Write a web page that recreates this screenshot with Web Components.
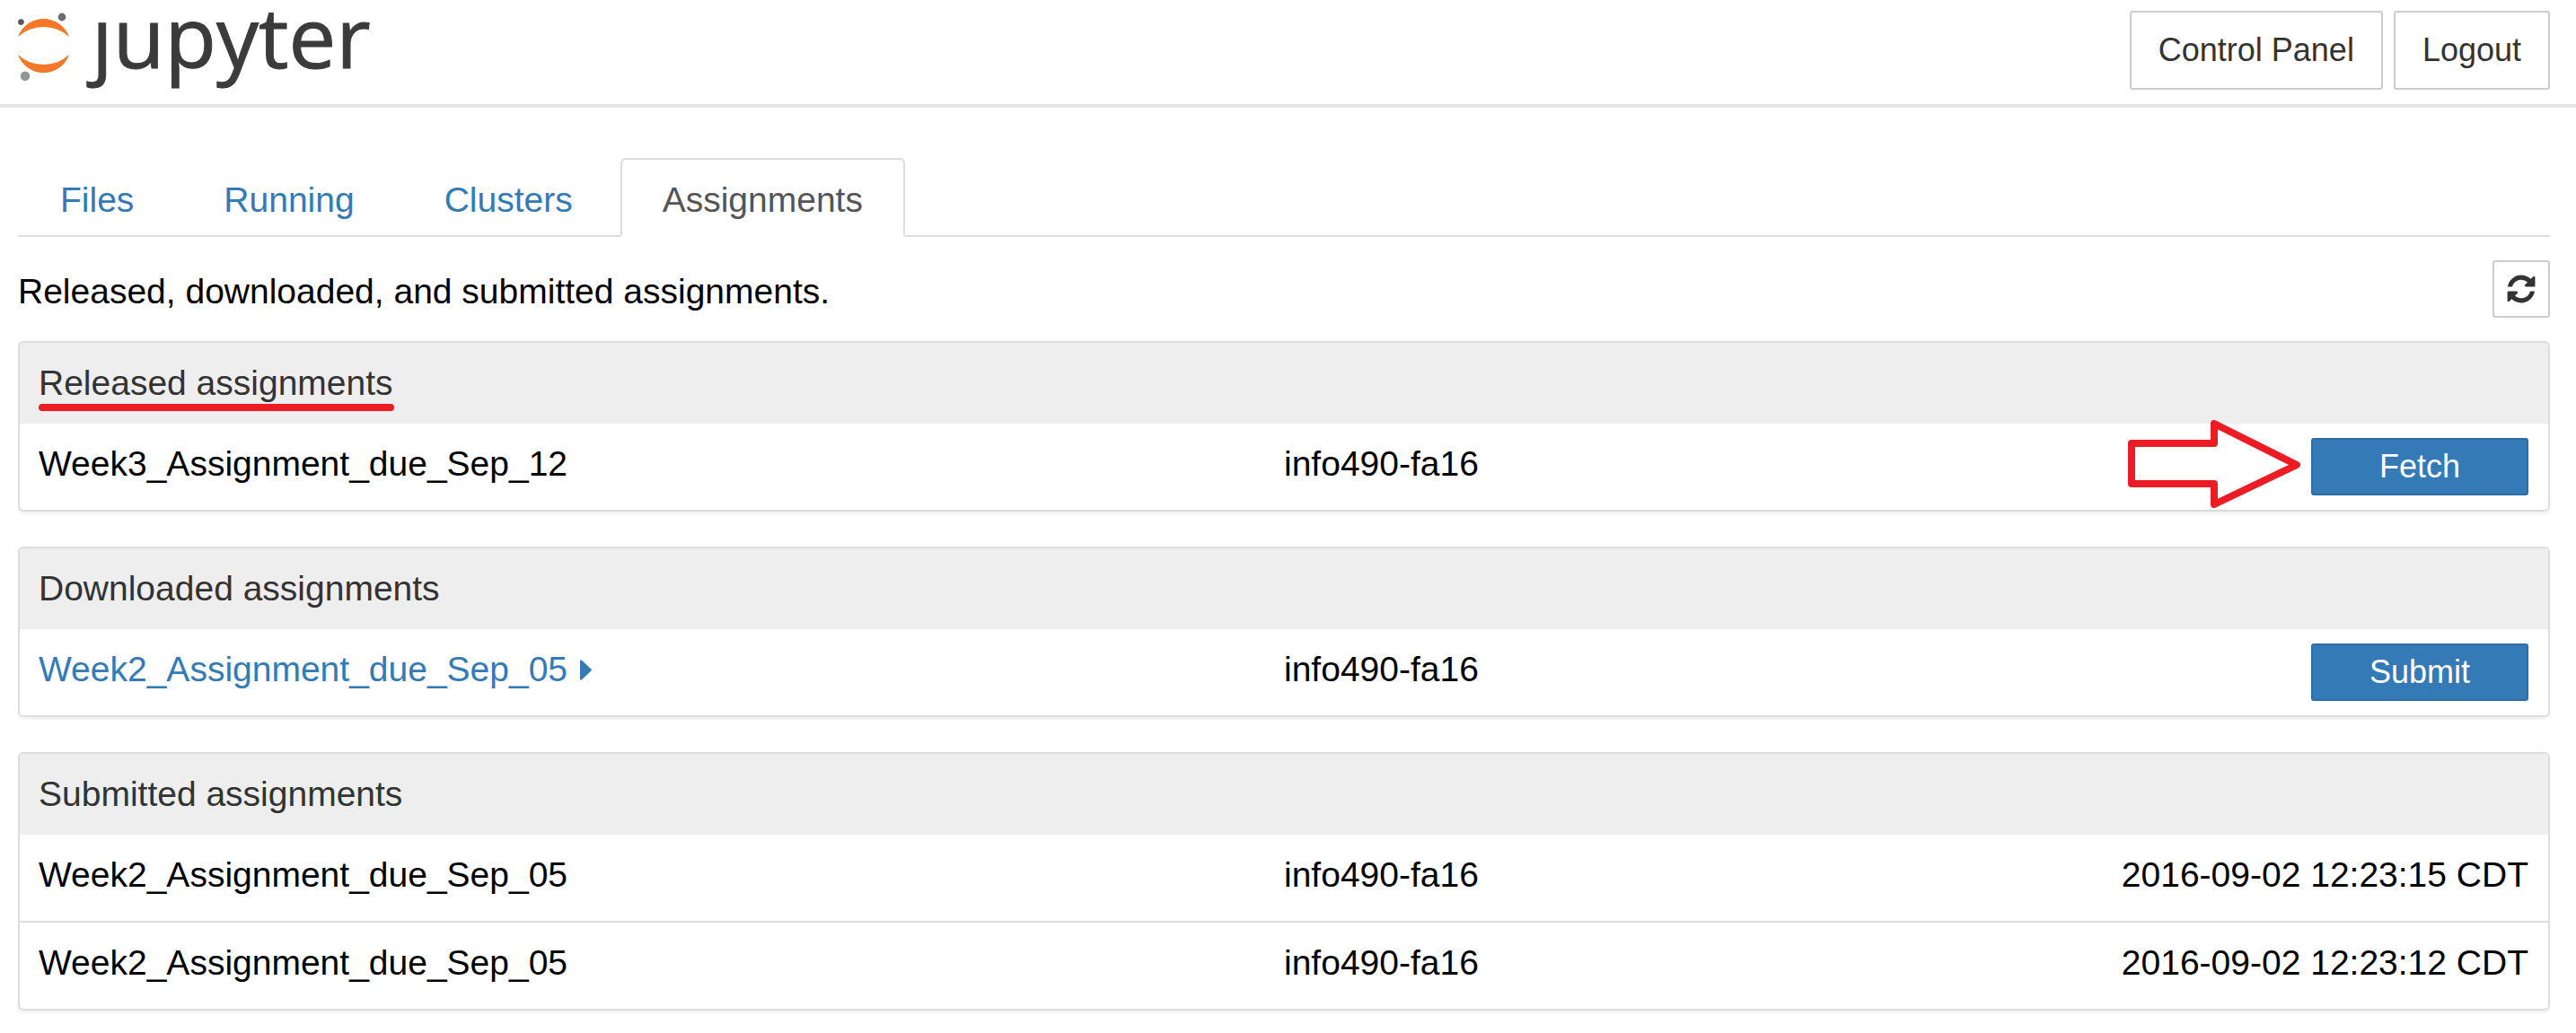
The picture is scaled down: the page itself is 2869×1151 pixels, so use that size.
<!DOCTYPE html>
<html lang="en">
<head>
<meta charset="utf-8">
<title>Assignments</title>
<style>
  body { margin: 0; background: #fff; color: #000; font: 39px/56px "Liberation Sans", Arial, sans-serif; }
</style>
</head>
<body>
<nb-page></nb-page>

<script>
const define = (name, html, setup) => {
  const template = document.createElement('template');
  template.innerHTML = html;
  customElements.define(name, class extends HTMLElement {
    connectedCallback() {
      if (this.shadowRoot) return;
      const root = this.attachShadow({ mode: 'open' });
      root.append(template.content.cloneNode(true));
      if (setup) setup(this, root);
    }
  });
};

define('nb-logo', `
  <style>
    :host { display: block; }
    a { display: flex; align-items: flex-start; gap: 24px; color: #3b3b3c; text-decoration: none; }
    svg { display: block; width: 58px; height: 80px; }
    .word { font: 94px/56px "Open Sans", "Noto Sans", sans-serif; -webkit-text-stroke: 1px currentColor; }
    /* the wordmark's j carries no dot */
    .j { display: inline-block; clip-path: inset(12px -20px -40px -30px); }
  </style>
  <a href="#" aria-label="jupyter">
    <svg viewBox="20 12 58 80" aria-hidden="true">
      <path fill="#f37726" d="M20 41A30.3 30.3 0 0 1 77 41A42.4 42.4 0 0 0 20 41ZM20 61A30.3 30.3 0 0 0 77 61A42.4 42.4 0 0 1 20 61Z"/>
      <circle cx="23.4" cy="24.6" r="3.3" fill="#58595b"/>
      <circle cx="69" cy="19" r="4.4" fill="#6d6e71"/>
      <circle cx="28" cy="84.8" r="5.2" fill="#939598"/>
    </svg>
    <span class="word"><span class="j">j</span>upyter</span>
  </a>`);

define('nb-button', `
  <style>
    :host { display: block; }
    button { display: block; box-sizing: border-box; width: 100%; margin: 0; padding: 0 30px; border: 2px solid #ccc;
      border-radius: 3px; background: #fff; color: #333; font: inherit; font-size: 36px; line-height: 84px; white-space: nowrap; }
    :host([kind=primary]) { width: 242px; }
    :host([kind=primary]) button { background: #337ab7; border-color: #2e6da4; color: #fff; line-height: 60px; }
    :host([kind=icon]) button { width: 64px; height: 64px; padding: 0; display: flex; align-items: center; justify-content: center; }
  </style>
  <button type="button"><slot></slot></button>`,
  (el, root) => {
    const label = el.getAttribute('label');
    if (label) root.querySelector('button').setAttribute('aria-label', label);
  });

define('nb-header', `
  <style>
    :host { display: flex; justify-content: space-between; align-items: flex-start; padding: 12px 29px 16px 20px; border-bottom: 4px solid #e7e7e7; }
    div { display: flex; gap: 12px; }
  </style>
  <nb-logo></nb-logo>
  <div><slot></slot></div>`);

define('nb-tab', `
  <style>
    :host { display: block; margin-bottom: -2px; }
    a { display: block; padding: 17px 45px 11px; border: 2px solid transparent; border-radius: 6px 6px 0 0; color: #337ab7; text-decoration: none; }
    :host([active]) a { color: #555; background: #fff; border-color: #ddd #ddd #fff; }
  </style>
  <a href="#"><slot></slot></a>`);

define('nb-tabs', `
  <style>
    :host { display: flex; gap: 6px; border-bottom: 2px solid #ddd; }
  </style>
  <slot></slot>`);

define('nb-toolbar', `
  <style>
    :host { display: flex; justify-content: space-between; align-items: flex-start; }
    p { margin: 0; line-height: 70px; }
    svg { display: block; width: 36px; height: 36px; fill: #333; }
  </style>
  <p><slot></slot></p>
  <nb-button kind="icon" label="Refresh">
    <svg viewBox="0 0 1792 1792" aria-hidden="true"><path d="M1639 1056q0 5-1 7-64 268-268 434.5t-478 166.5q-146 0-282.5-55t-243.5-157l-129 129q-19 19-45 19t-45-19-19-45v-448q0-26 19-45t45-19h448q26 0 45 19t19 45-19 45l-137 137q71 66 161 102t187 36q134 0 250-65t186-179q11-17 53-117 8-23 30-23h192q13 0 22.5 9.5t9.5 22.5zm25-800v448q0 26-19 45t-45 19h-448q-26 0-45-19t-19-45 19-45l138-138q-148-137-349-137-134 0-250 65t-186 179q-11 17-53 117-8 23-30 23h-199q-13 0-22.5-9.5t-9.5-22.5v-7q65-268 270-434.5t480-166.5q146 0 284 55.5t245 156.5l130-129q19-19 45-19t45 19 19 45z"/></svg>
  </nb-button>`);

define('nb-panel', `
  <style>
    :host { display: block; border: 2px solid #ddd; border-radius: 6px; box-shadow: 0 3px 3px rgba(0,0,0,.05); }
    h2 { margin: 0; padding: 17px 21px; background: #eee; color: #333; font: inherit; border-radius: 4px 4px 0 0; }
    h2 span { position: relative; display: inline-block; }
    :host([marked]) h2 span::after { content: ""; position: absolute; left: 0; right: -1px; top: 51px; height: 8px; border-radius: 4px; background: #ed1c24; }
  </style>
  <h2><span><slot name="title"></slot></span></h2>
  <slot></slot>`);

define('pointer-arrow', `
  <style>
    :host { position: absolute; right: 100%; top: -20px; margin-right: 12px; }
    svg { display: block; width: 192px; height: 98px; fill: none; stroke: #ed1c24; stroke-width: 8; stroke-linejoin: round; }
  </style>
  <svg viewBox="0 0 192 98" aria-hidden="true"><path d="M4 26H96V4L188 50L96 94V71H4Z"/></svg>`);

const assignments = {
  released: [{ name: 'Week3_Assignment_due_Sep_12', course: 'info490-fa16', action: 'Fetch', pointed: true }],
  downloaded: [{ name: 'Week2_Assignment_due_Sep_05', course: 'info490-fa16', action: 'Submit', link: true }],
  submitted: [
    { name: 'Week2_Assignment_due_Sep_05', course: 'info490-fa16', time: '2016-09-02 12:23:15 CDT' },
    { name: 'Week2_Assignment_due_Sep_05', course: 'info490-fa16', time: '2016-09-02 12:23:12 CDT' }
  ]
};

define('assignment-table', `
  <style>
    :host { display: block; }
    table { width: 100%; table-layout: fixed; border-spacing: 0; }
    td { padding: 17px 0 23px; vertical-align: top; white-space: nowrap; }
    td:first-child { width: 50%; padding-left: 21px; box-sizing: border-box; }
    td:last-child { padding-right: 22px; text-align: right; }
    td.action { padding-top: 16px; padding-bottom: 16px; }
    .action div { position: relative; width: fit-content; margin-left: auto; text-align: center; }
    tr + tr td { border-top: 2px solid #ddd; }
    a { display: inline-flex; align-items: center; gap: 14px; color: #337ab7; text-decoration: none; }
    svg { width: 13px; height: 23px; fill: currentColor; }
  </style>
  <table><tbody></tbody></table>`,
  (el, root) => {
    root.querySelector('tbody').innerHTML = assignments[el.getAttribute('kind')].map(row => `<tr>
      <td>${row.link ? `<a href="#">${row.name}<svg viewBox="0 0 13 23" aria-hidden="true"><path d="M0 1.2Q.8-.4 2 .8L12.4 10.6Q13.2 11.5 12.4 12.4L2 22.2Q.8 23.4 0 21.8Z"/></svg></a>` : row.name}</td>
      <td>${row.course}</td>
      ${row.action
        ? `<td class="action"><div>${row.pointed ? '<pointer-arrow></pointer-arrow>' : ''}<nb-button kind="primary">${row.action}</nb-button></div></td>`
        : `<td>${row.time}</td>`}
    </tr>`).join('');
  });

define('nb-page', `
  <style>
    :host { display: block; }
    main { padding: 56px 29px 25px 20px; }
    nb-toolbar { margin: 26px 0 20px; }
    section { display: flex; flex-direction: column; gap: 39px; }
  </style>
  <nb-header>
    <nb-button>Control Panel</nb-button>
    <nb-button>Logout</nb-button>
  </nb-header>
  <main>
    <nb-tabs>
      <nb-tab>Files</nb-tab>
      <nb-tab>Running</nb-tab>
      <nb-tab>Clusters</nb-tab>
      <nb-tab active>Assignments</nb-tab>
    </nb-tabs>
    <nb-toolbar>Released, downloaded, and submitted assignments.</nb-toolbar>
    <section>
      <nb-panel marked><span slot="title">Released assignments</span><assignment-table kind="released"></assignment-table></nb-panel>
      <nb-panel><span slot="title">Downloaded assignments</span><assignment-table kind="downloaded"></assignment-table></nb-panel>
      <nb-panel><span slot="title">Submitted assignments</span><assignment-table kind="submitted"></assignment-table></nb-panel>
    </section>
  </main>`);
</script>
</body>
</html>
